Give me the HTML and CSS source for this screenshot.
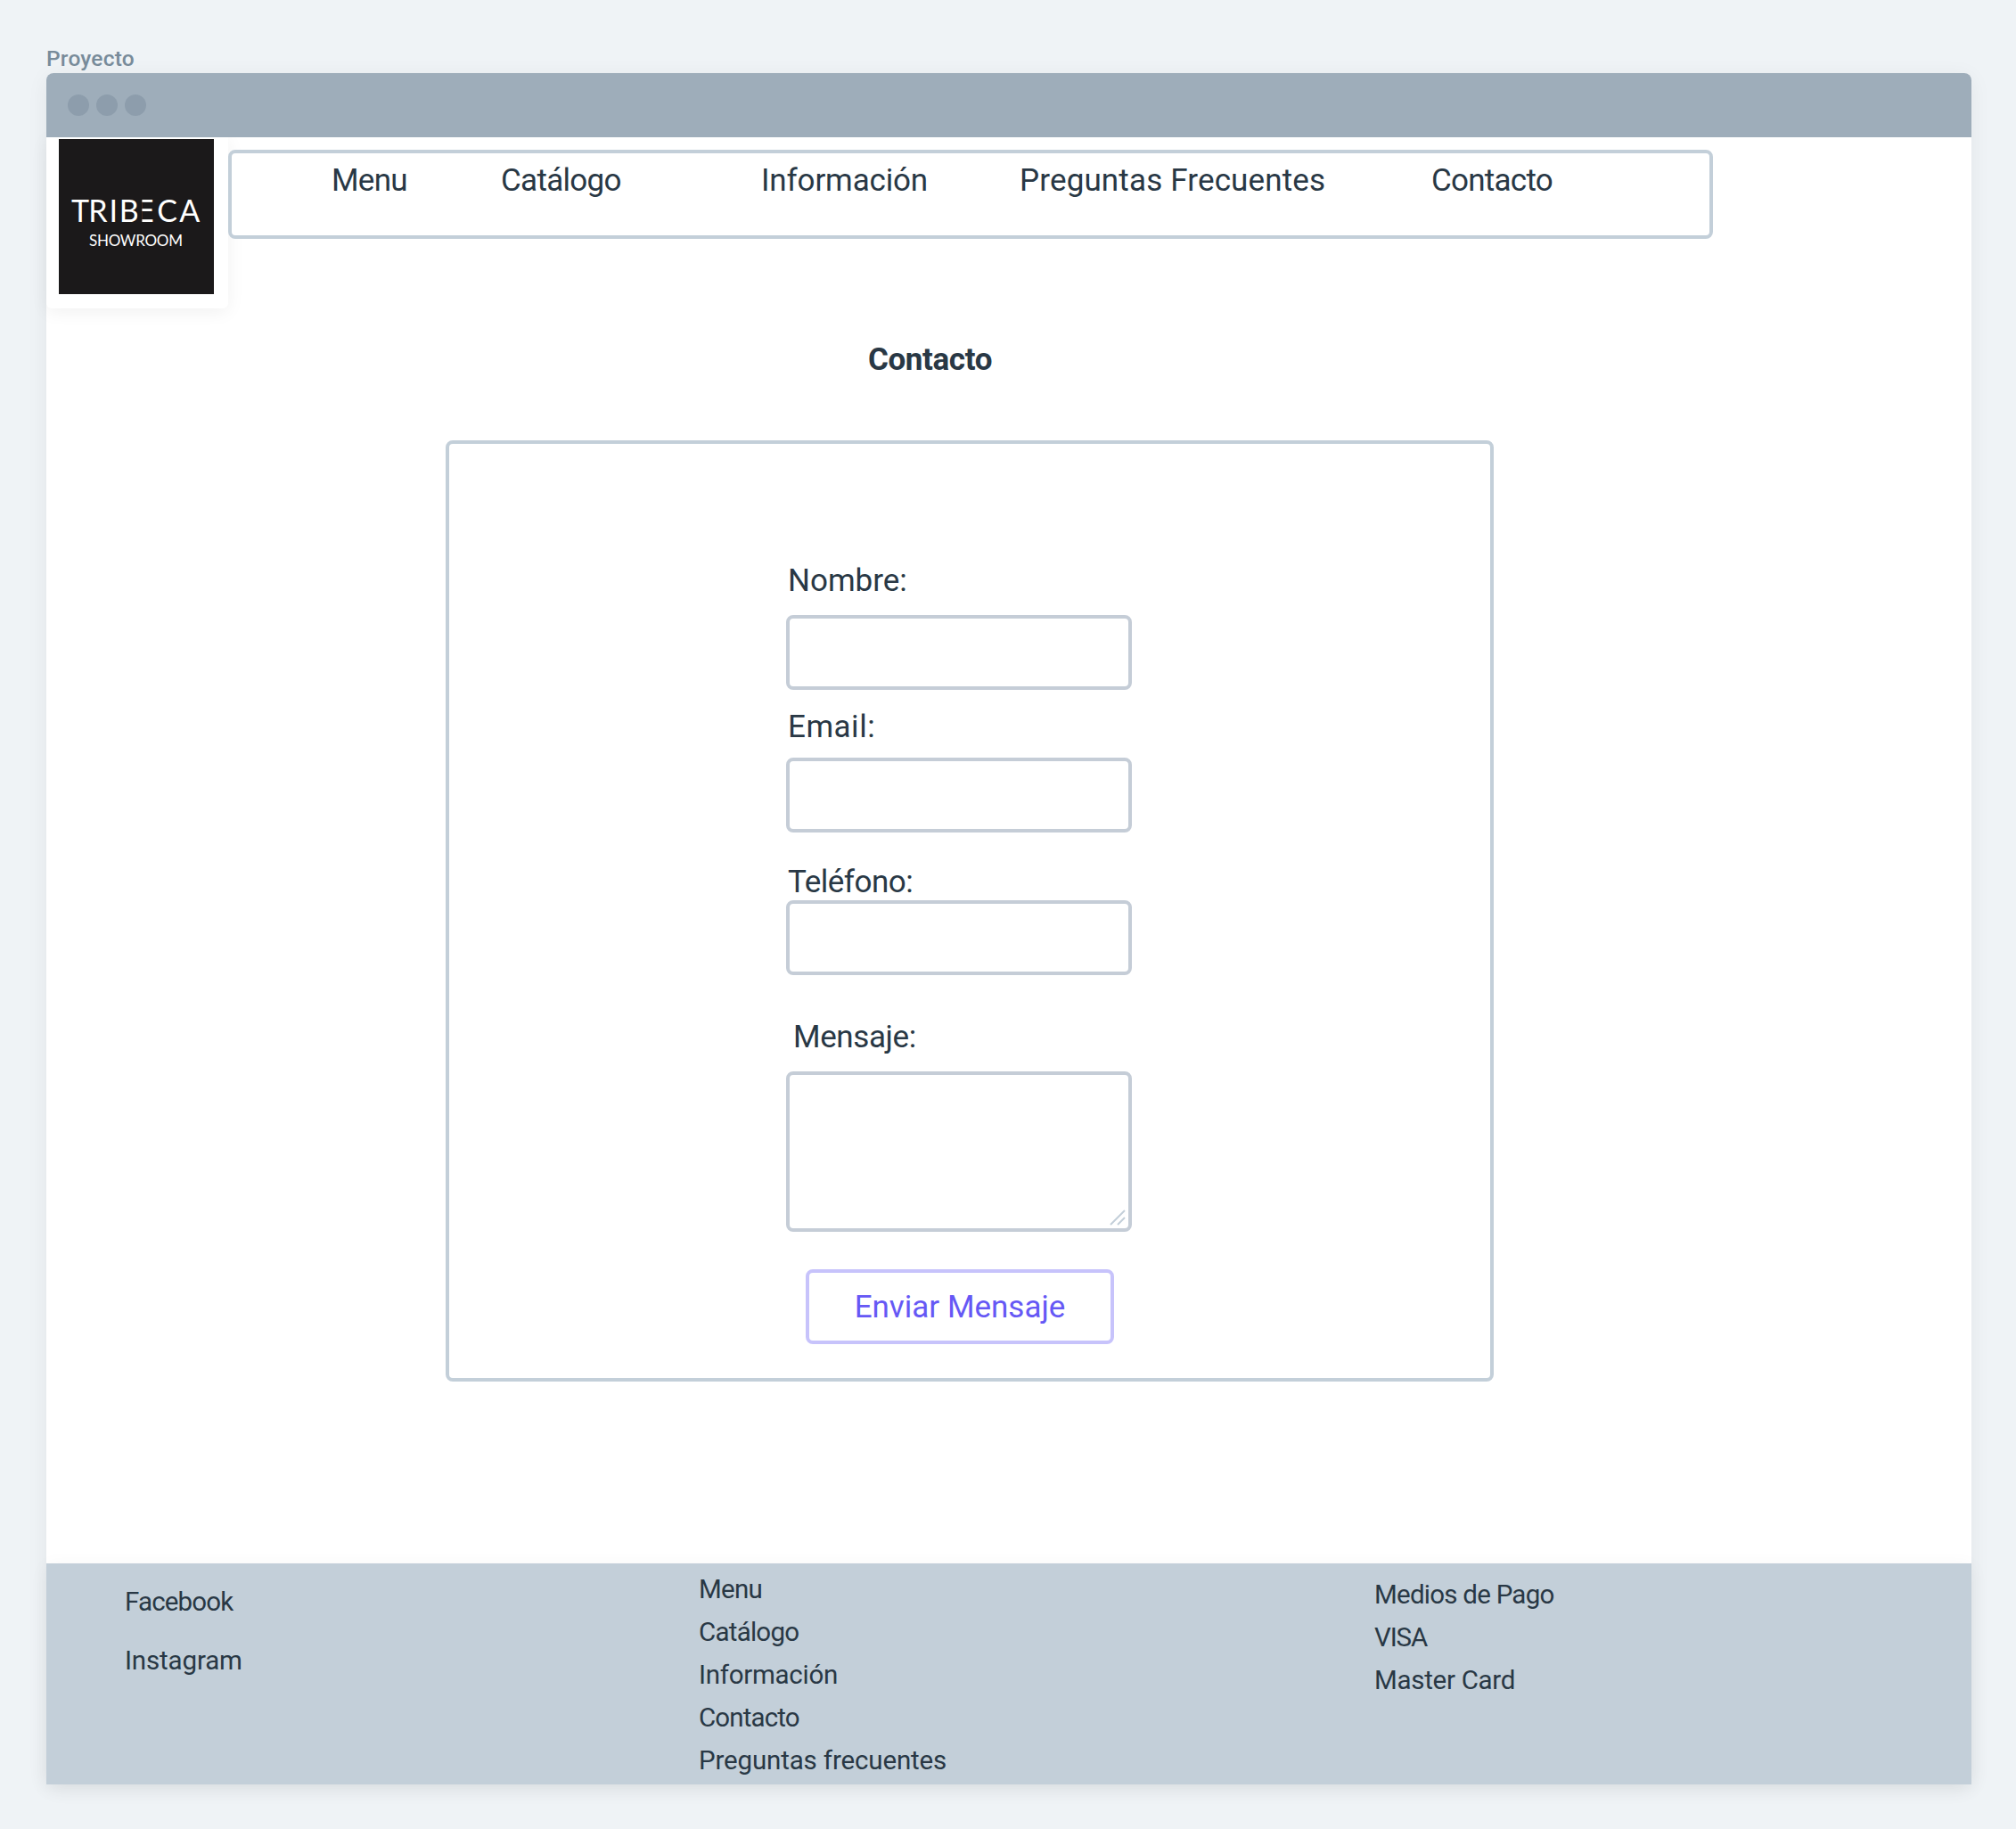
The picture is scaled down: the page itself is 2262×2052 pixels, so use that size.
FILE: index.html
```html
<!DOCTYPE html>
<html lang="es">
<head>
<meta charset="utf-8">
<title>Proyecto</title>
<link rel="stylesheet" href="styles.css">
</head>
<body>
<div class="frame-name">Proyecto</div>
<div class="browser">
  <div class="titlebar"><span class="dot"></span><span class="dot"></span><span class="dot"></span></div>
  <header class="header">
    <div class="logo-card">
      <svg class="logo" viewBox="0 0 174 174" role="img" aria-label="Tribeca Showroom">
        <rect width="174" height="174" fill="#1b191a"/>
        <text class="logo-main" x="14 33.2 56.6 67.8 86.3 110.3 135.3" y="93">TRIB<tspan class="logo-bars">E</tspan>CA</text>
        <rect x="88.6" y="67" width="4.8" height="28" fill="#1b191a"/>
        <text class="logo-sub" x="34" y="120" textLength="105">SHOWROOM</text>
      </svg>
    </div>
    <nav class="nav">
      <a class="ls-a">Menu</a>
      <a class="ls-a">Catálogo</a>
      <a class="ls-b">Información</a>
      <a class="ls-c">Preguntas Frecuentes</a>
      <a class="ls-d">Contacto</a>
    </nav>
  </header>
  <main class="main">
    <h1 class="title">Contacto</h1>
    <form class="form">
      <label class="label label-name">Nombre:</label>
      <div class="field field-name"></div>
      <label class="label label-email">Email:</label>
      <div class="field field-email"></div>
      <label class="label label-phone">Teléfono:</label>
      <div class="field field-phone"></div>
      <label class="label label-message">Mensaje:</label>
      <div class="field area">
        <svg class="grip" viewBox="0 0 18 18"><path d="M1 17 17 1M9 17l8-8"/></svg>
      </div>
      <button class="send" type="button">Enviar Mensaje</button>
    </form>
  </main>
  <footer class="footer">
    <div class="social">
      <a class="ls-e">Facebook</a>
      <a class="ls-b">Instagram</a>
    </div>
    <div class="links">
      <a class="ls-d">Menu</a>
      <a class="ls-d">Catálogo</a>
      <a class="ls-f">Información</a>
      <a class="ls-e">Contacto</a>
      <a class="ls-b">Preguntas frecuentes</a>
    </div>
    <div class="payment">
      <span class="ls-d">Medios de Pago</span>
      <span class="ls-g">VISA</span>
      <span class="ls-f">Master Card</span>
    </div>
  </footer>
</div>
</body>
</html>
```
FILE: styles.css
```css
* { box-sizing: border-box; }

body {
  margin: 0;
  height: 2052px;
  padding: 46px 50px 0 52px;
  background: #eff3f6;
  color: #293845;
  font-family: Roboto, "Liberation Sans", sans-serif;
  font-size: 35px;
}

.frame-name {
  height: 36px;
  line-height: 39px;
  color: #788b9a;
  font-size: 24.5px;
  font-weight: 500;
  letter-spacing: 0.2px;
}

.browser {
  display: flex;
  flex-direction: column;
  width: 2160px;
  height: 1920px;
  background: #fff;
  border-radius: 8px 8px 0 0;
  box-shadow: 0 4px 24px rgba(0, 0, 0, 0.06);
}

.titlebar {
  position: relative;
  z-index: 1;
  display: flex;
  align-items: center;
  gap: 8px;
  height: 72px;
  padding-left: 24px;
  background: #9eadba;
  border-radius: 8px 8px 0 0;
}

.dot {
  width: 24px;
  height: 24px;
  border-radius: 50%;
  background: #8d9dac;
}

.header { display: flex; height: 192px; }

.logo-card {
  width: 204px;
  height: 192px;
  padding: 2px 0 0 14px;
  background: #fff;
  border-radius: 0 0 6px 6px;
  box-shadow: 0 4px 20px rgba(0, 0, 0, 0.06);
}

.logo { display: block; width: 174px; height: 174px; }
.logo text { fill: #fff; font-family: Lato, sans-serif; }
.logo .logo-main { font-size: 34px; }
.logo .logo-sub { font-size: 17px; }
.logo .logo-bars { font-family: "DejaVu Sans", sans-serif; font-size: 33.5px; }

.nav {
  position: relative;
  display: grid;
  grid-template-columns: 190px 292px 290px 462px auto;
  width: 1666px;
  height: 100px;
  margin-top: 14px;
  padding: 7px 0 0 112px;
  border: 4px solid #c3cfd9;
  border-radius: 8px;
  background: #fff;
  line-height: 48px;
  white-space: nowrap;
}

.ls-a { letter-spacing: -0.7px; }
.ls-b { letter-spacing: -0.15px; }
.ls-c { letter-spacing: 0.15px; }
.ls-d { letter-spacing: -0.75px; }
.ls-e { letter-spacing: -0.86px; }
.ls-f { letter-spacing: -0.28px; }
.ls-g { letter-spacing: -1.1px; }

.main { flex: 1; }

.title {
  margin: 34px 0 66px 922px;
  font-size: 35px;
  font-weight: 700;
  line-height: 48px;
  letter-spacing: -0.4px;
}

.form {
  display: flex;
  flex-direction: column;
  align-items: flex-start;
  width: 1176px;
  height: 1056px;
  margin-left: 448px;
  padding: 134px 0 0 378px;
  border: 4px solid #c3cfd9;
  border-radius: 8px;
}

.label { line-height: 40px; margin-left: 2px; }
.label-name { letter-spacing: 0; }
.label-email { margin-top: 22px; letter-spacing: 0.5px; }
.label-phone { margin-top: 36px; letter-spacing: -0.5px; }
.label-message { margin: 50px 0 0 8px; letter-spacing: -0.4px; }

.field {
  width: 388px;
  height: 84px;
  border: 4px solid #c5cdd7;
  border-radius: 8px;
  background: #fff;
}
.field-name { margin-top: 18px; }
.field-email { margin-top: 14px; }
.field-phone { margin-top: 0; }

.area {
  display: flex;
  align-items: flex-end;
  justify-content: flex-end;
  height: 180px;
  margin-top: 18px;
  padding: 0 3px 3px 0;
}
.grip { width: 18px; height: 18px; fill: none; stroke: #c3cfd9; stroke-width: 2; }

.send {
  width: 346px;
  height: 84px;
  margin: 42px 0 0 22px;
  padding: 0;
  border: 4px solid #c7c3fb;
  border-radius: 8px;
  background: #fff;
  color: #6658f5;
  font: inherit;
  letter-spacing: 0;
}

.footer {
  display: grid;
  grid-template-columns: 644px 758px auto;
  height: 248px;
  padding-left: 88px;
  background: #c3cfd9;
  box-shadow: 0 4px 20px rgba(0, 0, 0, 0.05);
  font-size: 29.5px;
  line-height: 48px;
}
.footer > div { display: flex; flex-direction: column; }
.social { gap: 18px; padding-top: 19px; }
.links { padding-top: 5px; }
.payment { padding-top: 11px; }
```
